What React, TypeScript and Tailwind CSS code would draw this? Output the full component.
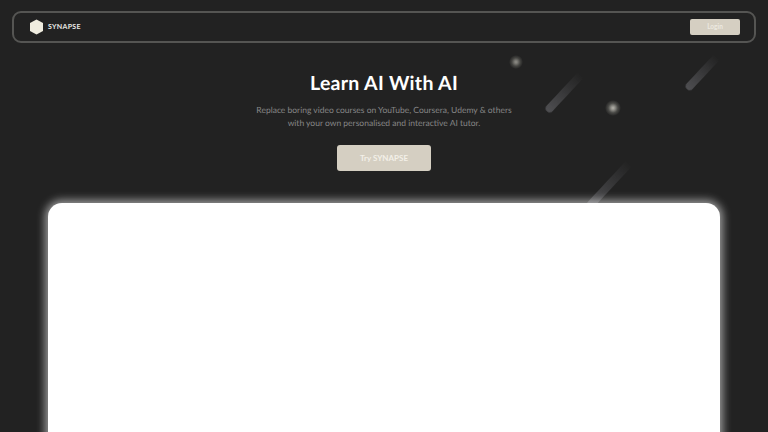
function Streak({ className }: { className: string }) {
  return (
    <div
      className={`absolute h-[8px] rounded-full rotate-[-47deg] blur-[0.5px] bg-gradient-to-r from-[#4f4f52] to-[#25252500] ${className}`}
    />
  );
}

export default function App() {
  return (
    <div className="relative h-[432px] overflow-hidden bg-[#222222] font-['Lato','Noto_Sans',sans-serif] [text-rendering:geometricPrecision]">
      <div className="absolute left-[509px] top-[55px] h-[14px] w-[14px] rounded-full bg-[radial-gradient(closest-side,#8f8e88_0%,#767570_25%,#444441_60%,#22222200_100%)]" />
      <div className="absolute left-[605px] top-[100px] h-[16px] w-[16px] rounded-full bg-[radial-gradient(closest-side,#b4b3ab_0%,#8f8e88_25%,#4a4a47_60%,#22222200_100%)]" />
      <Streak className="left-[539px] top-[89px] w-[50px]" />
      <Streak className="left-[680px] top-[69px] w-[44px]" />
      <Streak className="left-[579px] top-[181px] w-[60px]" />

      <div className="relative px-3 pt-[11px]">
        <nav className="flex h-[32px] items-center justify-between rounded-[9px] border-2 border-[#555553] pl-[15px] pr-[14px]">
          <div className="flex items-center gap-[4px]">
            <svg width="15" height="16" viewBox="0 0 15 16">
              <polygon
                points="7.5,0.5 14,4 14,12 7.5,15.5 1,12 1,4"
                fill="#efecdf"
              />
            </svg>
            <span className="text-[7px] font-bold tracking-[0.3px] text-[#e8e8e4]">
              SYNAPSE
            </span>
          </div>
          <button className="flex h-[16px] w-[50px] items-center justify-center rounded-[2px] bg-[#d5cfc2] text-[6.5px] font-bold text-[#ece9e0]">
            Login
          </button>
        </nav>
      </div>

      <div className="relative flex flex-col items-center pt-[28px]">
        <h1 className="text-[19.5px] leading-[26px] font-bold tracking-[0.3px] text-white">
          Learn AI With AI
        </h1>
        <p className="mt-[7px] text-center text-[8.5px] leading-[13px] text-[#868686]">
          Replace boring video courses on YouTube, Coursera, Udemy &amp; others
          <br />
          with your own personalised and interactive AI tutor.
        </p>
        <button className="mt-[15px] flex h-[26px] w-[94px] items-center justify-center rounded-[3px] bg-[#d5cfc2] text-[8px] font-bold text-[#f3f0e8]">
          Try SYNAPSE
        </button>
        <div className="mt-[32px] h-[300px] w-[672px] rounded-[14px] bg-white shadow-[0_0_9px_3px_rgba(255,255,255,0.55)]" />
      </div>
    </div>
  );
}
